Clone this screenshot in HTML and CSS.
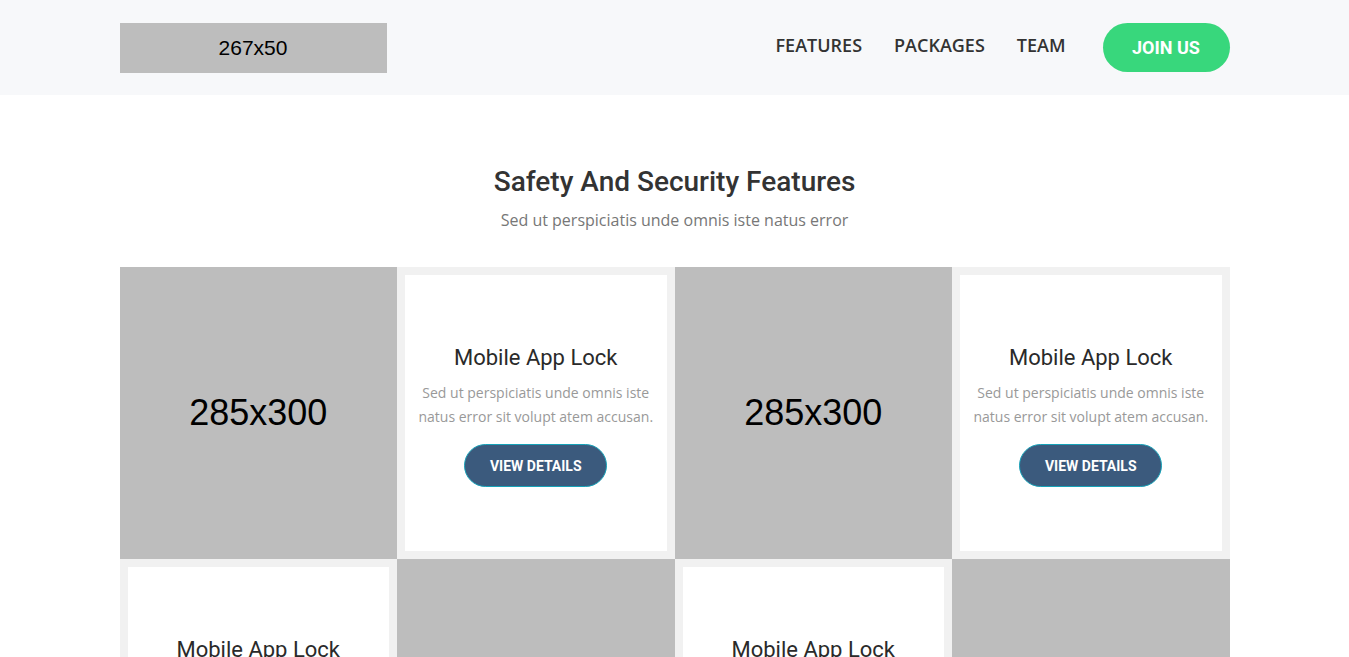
FILE: index.html
```html
<!DOCTYPE html>
<html>
<head>
<meta charset="utf-8">
<link rel="stylesheet" href="styles.css">
</head>
<body>
<header class="header">
  <div class="container header-inner">
    <div class="logo">267x50</div>
    <nav class="nav">
      <a class="nav-link" href="#">FEATURES</a>
      <a class="nav-link" href="#">PACKAGES</a>
      <a class="nav-link" href="#">TEAM</a>
      <a class="join-btn" href="#">JOIN US</a>
    </nav>
  </div>
</header>
<section class="features">
  <div class="container">
    <h2 class="section-title">Safety And Security Features</h2>
    <p class="section-sub">Sed ut perspiciatis unde omnis iste natus error</p>
    <div class="grid">
      <div class="img-cell">285x300</div>
      <div class="card-cell"><div class="card">
        <h3 class="card-title">Mobile App Lock</h3>
        <p class="card-text">Sed ut perspiciatis unde omnis iste natus error sit volupt atem accusan.</p>
        <a class="card-btn" href="#">VIEW DETAILS</a>
      </div></div>
      <div class="img-cell">285x300</div>
      <div class="card-cell"><div class="card">
        <h3 class="card-title">Mobile App Lock</h3>
        <p class="card-text">Sed ut perspiciatis unde omnis iste natus error sit volupt atem accusan.</p>
        <a class="card-btn" href="#">VIEW DETAILS</a>
      </div></div>
      <div class="card-cell"><div class="card">
        <h3 class="card-title">Mobile App Lock</h3>
        <p class="card-text">Sed ut perspiciatis unde omnis iste natus error sit volupt atem accusan.</p>
        <a class="card-btn" href="#">VIEW DETAILS</a>
      </div></div>
      <div class="img-cell">285x300</div>
      <div class="card-cell"><div class="card">
        <h3 class="card-title">Mobile App Lock</h3>
        <p class="card-text">Sed ut perspiciatis unde omnis iste natus error sit volupt atem accusan.</p>
        <a class="card-btn" href="#">VIEW DETAILS</a>
      </div></div>
      <div class="img-cell">285x300</div>
    </div>
  </div>
</section>
</body>
</html>
```
FILE: styles.css
```css
* { box-sizing: border-box; }
html, body { margin: 0; padding: 0; }
body {
  font-family: "Open Sans", "Liberation Sans", sans-serif;
  background: #ffffff;
  color: #333333;
}
.container {
  width: 1110px;
  margin: 0 auto;
}
.header {
  background: #f7f8fa;
  height: 95px;
}
.header-inner {
  display: flex;
  align-items: center;
  justify-content: space-between;
  height: 95px;
}
.logo {
  width: 267px;
  height: 50px;
  background: #bdbdbd;
  color: #000;
  font-family: "Liberation Sans", Arial, sans-serif;
  font-size: 21px;
  display: flex;
  align-items: center;
  justify-content: center;
  margin-top: 1px;
}
.nav {
  display: flex;
  align-items: center;
}
.nav-link {
  font-family: "Open Sans", sans-serif;
  font-weight: 600;
  font-size: 18px;
  color: #333333;
  text-decoration: none;
  margin-right: 32px;
  margin-top: -5px;
}
.join-btn {
  display: flex;
  align-items: center;
  justify-content: center;
  width: 127px;
  height: 49px;
  border-radius: 25px;
  background: #38d77c;
  color: #ffffff;
  font-family: Roboto, sans-serif;
  font-weight: 700;
  font-size: 18px;
  text-decoration: none;
  margin-left: 5px;
}
.features {
  padding-top: 68px;
}
.section-title {
  font-family: Roboto, sans-serif;
  font-weight: 500;
  font-size: 28px;
  color: #333333;
  text-align: center;
  margin: 0;
  line-height: 38px;
}
.section-sub {
  font-family: "Open Sans", sans-serif;
  font-size: 16px;
  color: #777777;
  text-align: center;
  margin: 8px 0 0;
  line-height: 22px;
}
.grid {
  margin-top: 36px;
  display: grid;
  grid-template-columns: repeat(4, 1fr);
}
.img-cell {
  aspect-ratio: 285 / 300;
  background: #bdbdbd;
  color: #000;
  font-family: "Liberation Sans", Arial, sans-serif;
  font-size: 36px;
  display: flex;
  align-items: center;
  justify-content: center;
}
.card-cell {
  background: #f1f1f1;
  padding: 8px;
  display: flex;
}
.card {
  background: #ffffff;
  flex: 1;
  display: flex;
  flex-direction: column;
  align-items: center;
  justify-content: center;
  text-align: center;
  padding: 4px 12px 0;
}
.card-title {
  font-family: Roboto, sans-serif;
  font-weight: 400;
  font-size: 22px;
  color: #2a2a2a;
  margin: 0 0 8px;
  line-height: 30px;
}
.card-text {
  font-family: "Open Sans", sans-serif;
  font-size: 14px;
  line-height: 24px;
  color: #999999;
  margin: 0 0 15px;
}
.card-btn {
  display: flex;
  align-items: center;
  justify-content: center;
  width: 143px;
  height: 43px;
  border-radius: 22px;
  background: #3b5a7d;
  border: 1px solid #17a2b8;
  color: #ffffff;
  font-family: Roboto, sans-serif;
  font-weight: 700;
  font-size: 14px;
  text-decoration: none;
}
```
